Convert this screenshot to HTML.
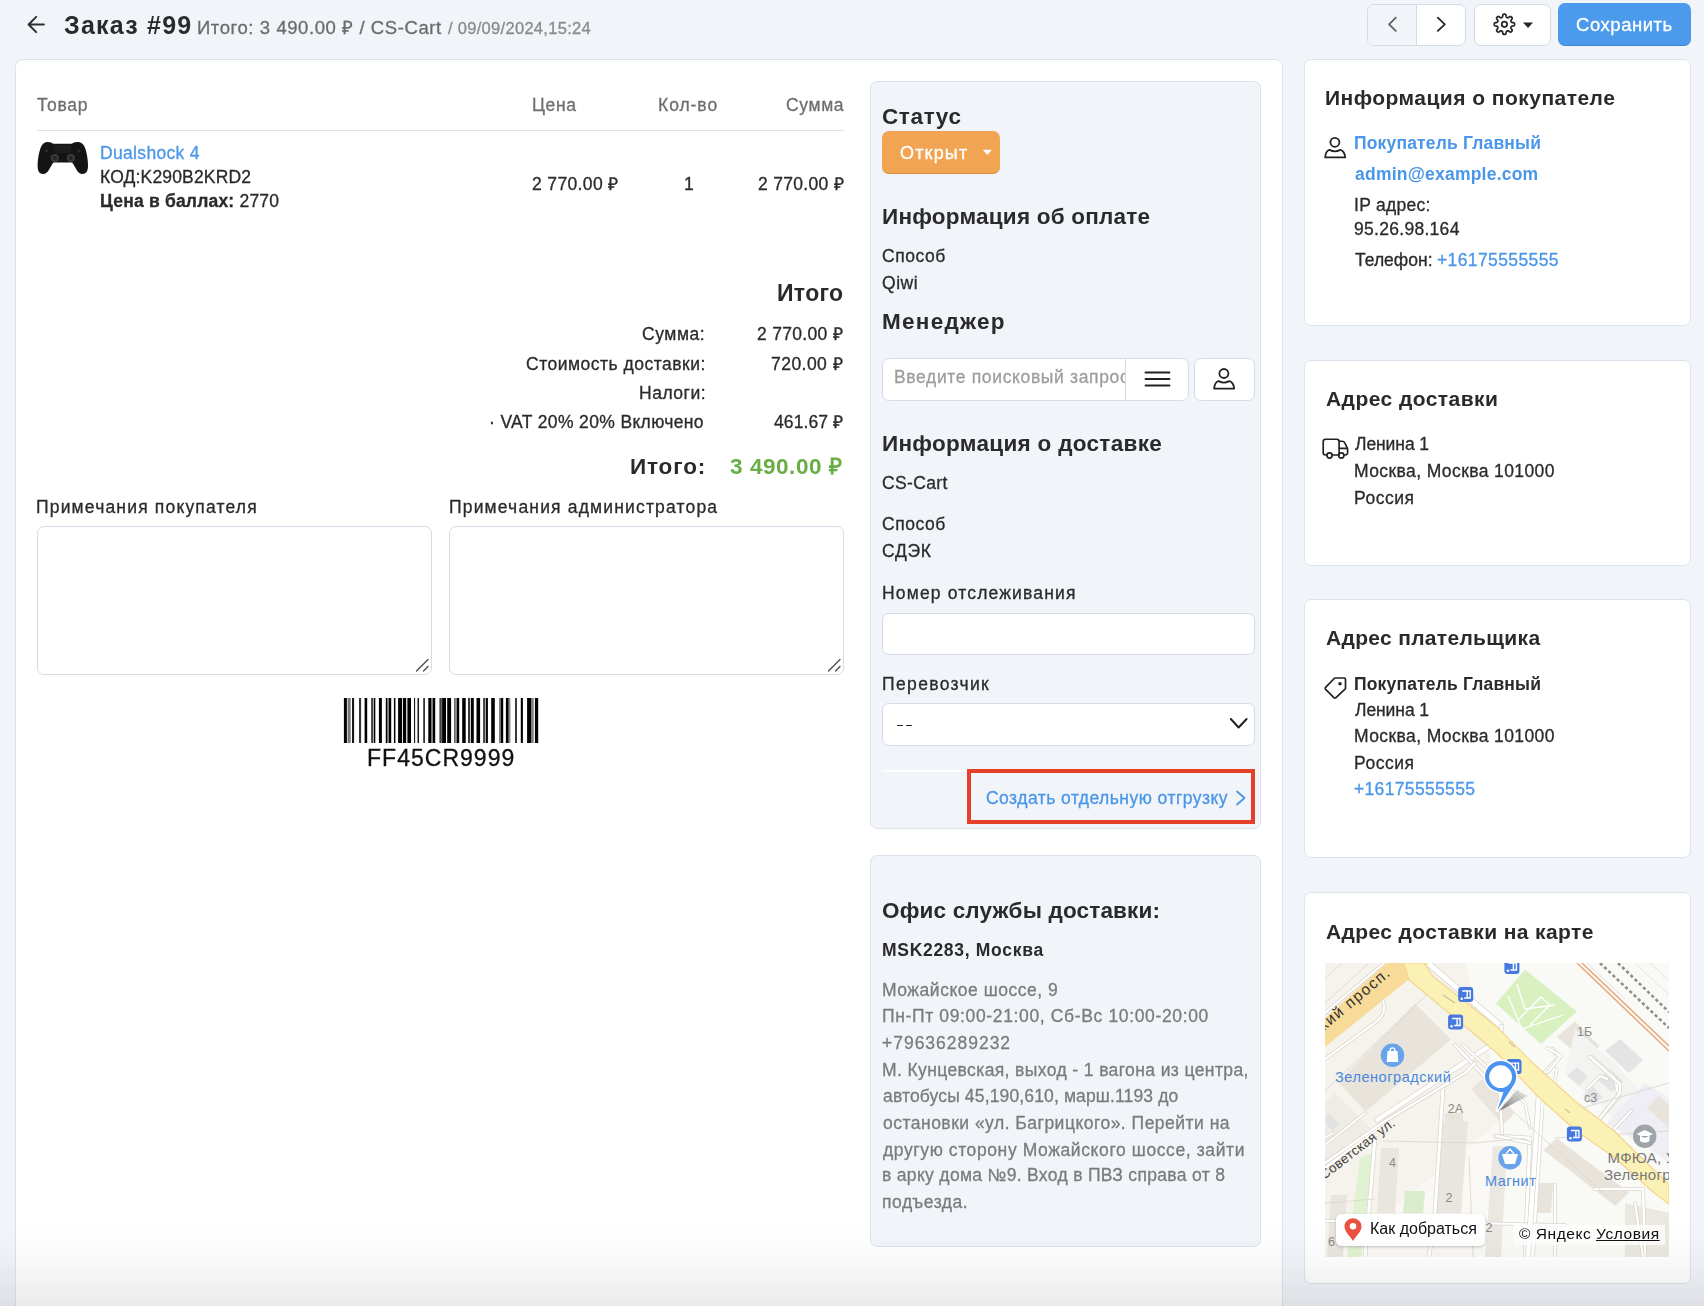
<!DOCTYPE html>
<html lang="ru"><head><meta charset="utf-8"><title>Заказ #99</title><style>
*{box-sizing:border-box}
html,body{margin:0;padding:0}
body{width:1704px;height:1306px;overflow:hidden;background:#f1f4f9;font-family:"Liberation Sans",sans-serif;position:relative}
.t{position:absolute;white-space:nowrap;line-height:40px;margin:0;will-change:transform}
.r{-webkit-text-stroke:0.3px currentColor}
.t b{font-weight:700}
.b{position:absolute}
svg{position:absolute;overflow:visible}
</style></head>
<body>
<svg style="left:26px;top:14px" width="21" height="21" viewBox="0 0 21 21" ><path d="M10.2 2.9 L2.6 10.5 L10.2 18.1 M2.6 10.5 H17.9" fill="none" stroke="#2f2f2f" stroke-width="2" stroke-linecap="round" stroke-linejoin="round"/></svg>
<div class="b" style="left:1367px;top:3.5px;width:98.5px;height:42px;border:1px solid #d3dbe7;border-radius:7px;background:#fff;overflow:hidden"></div>
<div class="b" style="left:1368px;top:4.5px;width:48.5px;height:40px;background:#f1f4f9;border-radius:6px 0 0 6px"></div>
<div class="b" style="left:1416px;top:4.5px;width:1px;height:40px;background:#d3dbe7"></div>
<svg style="left:1386px;top:16px" width="13" height="17" viewBox="0 0 13 17" ><path d="M9.8 1.7 L3.1 8.3 L9.8 14.9" fill="none" stroke="#5f5f5f" stroke-width="1.8" stroke-linecap="round" stroke-linejoin="round"/></svg>
<svg style="left:1435px;top:16px" width="13" height="17" viewBox="0 0 13 17" ><path d="M2.8 1.7 L9.8 8.3 L2.8 14.9" fill="none" stroke="#262626" stroke-width="1.8" stroke-linecap="round" stroke-linejoin="round"/></svg>
<div class="b" style="left:1473.5px;top:3.5px;width:77px;height:42px;border:1px solid #d3dbe7;border-radius:7px;background:#fff"></div>
<svg style="left:1492px;top:12px" width="25" height="25" viewBox="0 0 25 25" ><path d="M12.40 2.15 L12.60 2.15 L12.80 2.17 L13.00 2.20 L13.19 2.24 L13.38 2.31 L13.57 2.43 L13.74 2.61 L13.89 2.89 L14.01 3.29 L14.10 3.77 L14.17 4.25 L14.24 4.64 L14.32 4.93 L14.42 5.12 L14.54 5.25 L14.66 5.35 L14.78 5.42 L14.91 5.49 L15.04 5.55 L15.17 5.60 L15.31 5.66 L15.44 5.71 L15.58 5.75 L15.72 5.79 L15.87 5.81 L16.04 5.79 L16.25 5.73 L16.51 5.59 L16.84 5.36 L17.23 5.07 L17.64 4.79 L18.00 4.59 L18.30 4.50 L18.56 4.49 L18.77 4.54 L18.95 4.63 L19.12 4.73 L19.28 4.86 L19.43 4.99 L19.58 5.12 L19.71 5.27 L19.84 5.42 L19.97 5.58 L20.07 5.75 L20.16 5.93 L20.21 6.14 L20.20 6.40 L20.11 6.70 L19.91 7.06 L19.63 7.47 L19.34 7.86 L19.11 8.19 L18.97 8.45 L18.91 8.66 L18.89 8.83 L18.91 8.98 L18.95 9.12 L18.99 9.26 L19.04 9.39 L19.10 9.53 L19.15 9.66 L19.21 9.79 L19.28 9.92 L19.35 10.04 L19.45 10.16 L19.58 10.28 L19.77 10.38 L20.06 10.46 L20.45 10.53 L20.93 10.60 L21.41 10.69 L21.81 10.81 L22.09 10.96 L22.27 11.13 L22.39 11.32 L22.46 11.51 L22.50 11.70 L22.53 11.90 L22.55 12.10 L22.55 12.30 L22.55 12.50 L22.53 12.70 L22.50 12.90 L22.46 13.09 L22.39 13.28 L22.27 13.47 L22.09 13.64 L21.81 13.79 L21.41 13.91 L20.93 14.00 L20.45 14.07 L20.06 14.14 L19.77 14.22 L19.58 14.32 L19.45 14.44 L19.35 14.56 L19.28 14.68 L19.21 14.81 L19.15 14.94 L19.10 15.07 L19.04 15.21 L18.99 15.34 L18.95 15.48 L18.91 15.62 L18.89 15.77 L18.91 15.94 L18.97 16.15 L19.11 16.41 L19.34 16.74 L19.63 17.13 L19.91 17.54 L20.11 17.90 L20.20 18.20 L20.21 18.46 L20.16 18.67 L20.07 18.85 L19.97 19.02 L19.84 19.18 L19.71 19.33 L19.58 19.48 L19.43 19.61 L19.28 19.74 L19.12 19.87 L18.95 19.97 L18.77 20.06 L18.56 20.11 L18.30 20.10 L18.00 20.01 L17.64 19.81 L17.23 19.53 L16.84 19.24 L16.51 19.01 L16.25 18.87 L16.04 18.81 L15.87 18.79 L15.72 18.81 L15.58 18.85 L15.44 18.89 L15.31 18.94 L15.17 19.00 L15.04 19.05 L14.91 19.11 L14.78 19.18 L14.66 19.25 L14.54 19.35 L14.42 19.48 L14.32 19.67 L14.24 19.96 L14.17 20.35 L14.10 20.83 L14.01 21.31 L13.89 21.71 L13.74 21.99 L13.57 22.17 L13.38 22.29 L13.19 22.36 L13.00 22.40 L12.80 22.43 L12.60 22.45 L12.40 22.45 L12.20 22.45 L12.00 22.43 L11.80 22.40 L11.61 22.36 L11.42 22.29 L11.23 22.17 L11.06 21.99 L10.91 21.71 L10.79 21.31 L10.70 20.83 L10.63 20.35 L10.56 19.96 L10.48 19.67 L10.38 19.48 L10.26 19.35 L10.14 19.25 L10.02 19.18 L9.89 19.11 L9.76 19.05 L9.63 19.00 L9.49 18.94 L9.36 18.89 L9.22 18.85 L9.08 18.81 L8.93 18.79 L8.76 18.81 L8.55 18.87 L8.29 19.01 L7.96 19.24 L7.57 19.53 L7.16 19.81 L6.80 20.01 L6.50 20.10 L6.24 20.11 L6.03 20.06 L5.85 19.97 L5.68 19.87 L5.52 19.74 L5.37 19.61 L5.22 19.48 L5.09 19.33 L4.96 19.18 L4.83 19.02 L4.73 18.85 L4.64 18.67 L4.59 18.46 L4.60 18.20 L4.69 17.90 L4.89 17.54 L5.17 17.13 L5.46 16.74 L5.69 16.41 L5.83 16.15 L5.89 15.94 L5.91 15.77 L5.89 15.62 L5.85 15.48 L5.81 15.34 L5.76 15.21 L5.70 15.07 L5.65 14.94 L5.59 14.81 L5.52 14.68 L5.45 14.56 L5.35 14.44 L5.22 14.32 L5.03 14.22 L4.74 14.14 L4.35 14.07 L3.87 14.00 L3.39 13.91 L2.99 13.79 L2.71 13.64 L2.53 13.47 L2.41 13.28 L2.34 13.09 L2.30 12.90 L2.27 12.70 L2.25 12.50 L2.25 12.30 L2.25 12.10 L2.27 11.90 L2.30 11.70 L2.34 11.51 L2.41 11.32 L2.53 11.13 L2.71 10.96 L2.99 10.81 L3.39 10.69 L3.87 10.60 L4.35 10.53 L4.74 10.46 L5.03 10.38 L5.22 10.28 L5.35 10.16 L5.45 10.04 L5.52 9.92 L5.59 9.79 L5.65 9.66 L5.70 9.53 L5.76 9.39 L5.81 9.26 L5.85 9.12 L5.89 8.98 L5.91 8.83 L5.89 8.66 L5.83 8.45 L5.69 8.19 L5.46 7.86 L5.17 7.47 L4.89 7.06 L4.69 6.70 L4.60 6.40 L4.59 6.14 L4.64 5.93 L4.73 5.75 L4.83 5.58 L4.96 5.42 L5.09 5.27 L5.22 5.12 L5.37 4.99 L5.52 4.86 L5.68 4.73 L5.85 4.63 L6.03 4.54 L6.24 4.49 L6.50 4.50 L6.80 4.59 L7.16 4.79 L7.57 5.07 L7.96 5.36 L8.29 5.59 L8.55 5.73 L8.76 5.79 L8.93 5.81 L9.08 5.79 L9.22 5.75 L9.36 5.71 L9.49 5.66 L9.63 5.60 L9.76 5.55 L9.89 5.49 L10.02 5.42 L10.14 5.35 L10.26 5.25 L10.38 5.12 L10.48 4.93 L10.56 4.64 L10.63 4.25 L10.70 3.77 L10.79 3.29 L10.91 2.89 L11.06 2.61 L11.23 2.43 L11.42 2.31 L11.61 2.24 L11.80 2.20 L12.00 2.17 L12.20 2.15Z" fill="none" stroke="#262626" stroke-width="1.75" stroke-linejoin="round"/><circle cx="12.4" cy="12.3" r="2.7" fill="none" stroke="#262626" stroke-width="1.75"/></svg>
<svg style="left:1522px;top:21.8px" width="12" height="7" viewBox="0 0 12 7" ><path d="M1 0.5 H11 L6 6.1Z" fill="#262626"/></svg>
<div class="b" style="left:1558px;top:3px;width:133px;height:43px;background:#4b9aec;border-radius:7px;border-bottom:1px solid #3f86d6"></div>
<div class="b" style="left:15px;top:59px;width:1268px;height:1300px;background:#fff;border:1px solid #dde3ec;border-radius:8px"></div>
<div class="b" style="left:37px;top:130px;width:807px;height:1px;background:#d8e0ea"></div>
<svg style="left:36px;top:140px" width="54" height="36" viewBox="0 0 54 36" ><path d="M11.9 2 C14.5 2 16 3 17.5 3.8 H35.5 C37 3 38.7 2 41.3 2 C45.5 2 48 4.5 49.5 9 C51 14 52 20 52 26 C52 31 50 34 46.5 34 C43.5 34 42 32 41 30.5 C39.5 28 37.5 24 36 22.5 H17.5 C16 24 14 28 12.5 30.5 C11.5 32 10 34 7 34 C3.5 34 1.6 31 1.6 26 C1.6 20 2.6 14 4.2 9 C5.7 4.5 8 2 11.9 2 Z" fill="#141414"/>
<path d="M17.5 5 H35.5 L34 13 H19 Z" fill="#1c1c1e"/>
<circle cx="18.8" cy="18" r="4.1" fill="#3b3b3d"/><circle cx="34.8" cy="18" r="4.1" fill="#3b3b3d"/>
<circle cx="18.8" cy="18" r="2.3" fill="#262628"/><circle cx="34.8" cy="18" r="2.3" fill="#262628"/>
<circle cx="10.5" cy="11" r="1.6" fill="#2c2c2e"/><circle cx="43" cy="11" r="1.6" fill="#2c2c2e"/></svg>
<div class="b" style="left:37px;top:526px;width:395px;height:149px;background:#fff;border:1px solid #d5dce8;border-radius:7px"></div>
<svg style="left:414px;top:657px" width="16" height="16" viewBox="0 0 16 16" ><path d="M2.5 14 L14 2.5 M9.5 14 L14 9.5" fill="none" stroke="#4a4a4a" stroke-width="1.3" stroke-linecap="round"/></svg>
<div class="b" style="left:449px;top:526px;width:395px;height:149px;background:#fff;border:1px solid #d5dce8;border-radius:7px"></div>
<svg style="left:826px;top:657px" width="16" height="16" viewBox="0 0 16 16" ><path d="M2.5 14 L14 2.5 M9.5 14 L14 9.5" fill="none" stroke="#4a4a4a" stroke-width="1.3" stroke-linecap="round"/></svg>
<svg style="left:340px;top:698px" width="200" height="46" viewBox="0 0 200 46"><rect x="3.90" y="0" width="3.00" height="45" fill="#000" fill-opacity="1"/><rect x="7.60" y="0" width="1.80" height="45" fill="#000" fill-opacity="0.55"/><rect x="9.60" y="0" width="0.80" height="45" fill="#000" fill-opacity="0.9"/><rect x="12.00" y="0" width="2.10" height="45" fill="#000" fill-opacity="0.9"/><rect x="19.00" y="0" width="2.10" height="45" fill="#000" fill-opacity="0.8"/><rect x="24.60" y="0" width="2.60" height="45" fill="#000" fill-opacity="1"/><rect x="31.10" y="0" width="2.10" height="45" fill="#000" fill-opacity="0.75"/><rect x="33.80" y="0" width="1.50" height="45" fill="#000" fill-opacity="1"/><rect x="38.90" y="0" width="3.00" height="45" fill="#000" fill-opacity="1"/><rect x="45.80" y="0" width="1.50" height="45" fill="#000" fill-opacity="1"/><rect x="47.30" y="0" width="1.50" height="45" fill="#000" fill-opacity="0.45"/><rect x="48.80" y="0" width="2.40" height="45" fill="#000" fill-opacity="1"/><rect x="53.90" y="0" width="1.50" height="45" fill="#000" fill-opacity="1"/><rect x="58.10" y="0" width="3.90" height="45" fill="#000" fill-opacity="1"/><rect x="62.90" y="0" width="3.30" height="45" fill="#000" fill-opacity="1"/><rect x="67.40" y="0" width="3.60" height="45" fill="#000" fill-opacity="1"/><rect x="74.00" y="0" width="1.10" height="45" fill="#000" fill-opacity="0.9"/><rect x="77.50" y="0" width="1.50" height="45" fill="#000" fill-opacity="0.9"/><rect x="83.20" y="0" width="1.80" height="45" fill="#000" fill-opacity="0.8"/><rect x="88.30" y="0" width="3.00" height="45" fill="#000" fill-opacity="1"/><rect x="91.30" y="0" width="1.50" height="45" fill="#000" fill-opacity="0.45"/><rect x="92.80" y="0" width="2.40" height="45" fill="#000" fill-opacity="1"/><rect x="99.40" y="0" width="2.40" height="45" fill="#000" fill-opacity="0.75"/><rect x="102.10" y="0" width="3.90" height="45" fill="#000" fill-opacity="1"/><rect x="107.20" y="0" width="3.90" height="45" fill="#000" fill-opacity="1"/><rect x="114.10" y="0" width="0.60" height="45" fill="#000" fill-opacity="0.9"/><rect x="114.70" y="0" width="2.10" height="45" fill="#000" fill-opacity="0.45"/><rect x="116.80" y="0" width="2.40" height="45" fill="#000" fill-opacity="1"/><rect x="122.20" y="0" width="3.50" height="45" fill="#000" fill-opacity="1"/><rect x="128.10" y="0" width="1.80" height="45" fill="#000" fill-opacity="0.85"/><rect x="130.80" y="0" width="3.00" height="45" fill="#000" fill-opacity="1"/><rect x="136.50" y="0" width="3.60" height="45" fill="#000" fill-opacity="1"/><rect x="143.10" y="0" width="2.10" height="45" fill="#000" fill-opacity="0.75"/><rect x="145.80" y="0" width="2.10" height="45" fill="#000" fill-opacity="1"/><rect x="151.20" y="0" width="3.60" height="45" fill="#000" fill-opacity="1"/><rect x="159.00" y="0" width="1.20" height="45" fill="#000" fill-opacity="0.5"/><rect x="160.50" y="0" width="2.70" height="45" fill="#000" fill-opacity="1"/><rect x="165.90" y="0" width="2.70" height="45" fill="#000" fill-opacity="1"/><rect x="168.60" y="0" width="1.80" height="45" fill="#000" fill-opacity="0.45"/><rect x="175.10" y="0" width="1.80" height="45" fill="#000" fill-opacity="0.85"/><rect x="180.80" y="0" width="2.10" height="45" fill="#000" fill-opacity="1"/><rect x="187.10" y="0" width="3.90" height="45" fill="#000" fill-opacity="1"/><rect x="191.00" y="0" width="2.70" height="45" fill="#000" fill-opacity="0.5"/><rect x="194.90" y="0" width="3.30" height="45" fill="#000" fill-opacity="1"/></svg>
<div class="b" style="left:870px;top:81px;width:391px;height:748px;background:#f1f4f9;border:1px solid #dde3ec;border-radius:7px"></div>
<div class="b" style="left:882px;top:131px;width:118px;height:43px;background:#f1a553;border-radius:7px;border-bottom:1px solid #dd8c3c"></div>
<svg style="left:982px;top:149px" width="11" height="7" viewBox="0 0 11 7" ><path d="M0.8 0.8 H10 L5.4 5.9Z" fill="#fff"/></svg>
<div class="b" style="left:882px;top:358px;width:307px;height:43px;background:#fff;border:1px solid #d5dce8;border-radius:7px"></div>
<div class="b" style="left:1125px;top:359px;width:62px;height:41px;background:#fff;border-left:1px solid #d5dce8;border-radius:0 6px 6px 0;z-index:2"></div>
<svg style="left:1144px;top:370px;z-index:3" width="27" height="18" viewBox="0 0 27 18" ><path d="M1.5 2.5 H25.5 M1.5 9 H25.5 M1.5 15.5 H25.5" fill="none" stroke="#222" stroke-width="1.8" stroke-linecap="round"/></svg>
<div class="b" style="left:1194px;top:358px;width:61px;height:43px;background:#fff;border:1px solid #d5dce8;border-radius:7px"></div>
<svg style="left:1211px;top:367px" width="26" height="26" viewBox="0 0 26 26" ><g transform="translate(1,1)" fill="none" stroke="#222" stroke-width="1.8" stroke-linejoin="round"><circle cx="11.9" cy="5.5" r="4.5"/><path d="M2.2 20.6 C2.2 16.5 4.5 13.2 6.5 13.1 C8.2 13.9 9.8 14.6 11.9 14.6 C14 14.6 15.6 13.9 17.3 13.1 C19.3 13.2 22.2 16.5 22.2 20.6 Z"/></g></svg>
<div class="b" style="left:882px;top:612.5px;width:373px;height:42.5px;background:#fff;border:1px solid #d5dce8;border-radius:7px"></div>
<div class="b" style="left:882px;top:703px;width:373px;height:43px;background:#fff;border:1px solid #d5dce8;border-radius:7px"></div>
<svg style="left:1229px;top:717px" width="20" height="14" viewBox="0 0 20 14" ><path d="M1.8 2 L9.6 10.5 L17.6 2" fill="none" stroke="#222" stroke-width="2" stroke-linecap="round" stroke-linejoin="round"/></svg>
<div class="b" style="left:882px;top:770px;width:373px;height:1.5px;background:#fcfdfe"></div>
<div class="b" style="left:897.3px;top:724.9px;width:6.1px;height:1.6px;background:#262626;border-radius:1px"></div>
<div class="b" style="left:906.2px;top:724.9px;width:6.0px;height:1.6px;background:#262626;border-radius:1px"></div>
<svg style="left:1234px;top:789px" width="14" height="18" viewBox="0 0 14 18" ><path d="M3 2.5 L10.5 9 L3 15.5" fill="none" stroke="#4a96e8" stroke-width="1.8" stroke-linecap="round" stroke-linejoin="round"/></svg>
<div class="b" style="left:967px;top:768.5px;width:288px;height:55px;border:4px solid #e5402a"></div>
<div class="b" style="left:870px;top:855px;width:391px;height:392px;background:#f1f4f9;border:1px solid #dde3ec;border-radius:7px"></div>
<div class="b" style="left:1304px;top:59px;width:387px;height:267.0px;background:#fff;border:1px solid #dde3ec;border-radius:7px"></div>
<div class="b" style="left:1304px;top:360px;width:387px;height:206.0px;background:#fff;border:1px solid #dde3ec;border-radius:7px"></div>
<div class="b" style="left:1304px;top:599px;width:387px;height:259.0px;background:#fff;border:1px solid #dde3ec;border-radius:7px"></div>
<div class="b" style="left:1304px;top:892px;width:387px;height:392.0px;background:#fff;border:1px solid #dde3ec;border-radius:7px"></div>
<svg style="left:1321px;top:134px" width="28" height="28" viewBox="0 0 28 28" ><g transform="translate(2,2.8)" fill="none" stroke="#222" stroke-width="1.8" stroke-linejoin="round"><circle cx="11.9" cy="5.5" r="4.5"/><path d="M2.2 20.6 C2.2 16.5 4.5 13.2 6.5 13.1 C8.2 13.9 9.8 14.6 11.9 14.6 C14 14.6 15.6 13.9 17.3 13.1 C19.3 13.2 22.2 16.5 22.2 20.6 Z"/></g></svg>
<svg style="left:1320px;top:436px" width="32" height="26" viewBox="0 0 32 26" ><g fill="none" stroke="#222" stroke-width="1.65" stroke-linejoin="round" stroke-linecap="round"><path d="M6.8 19 H5.4 C4.1 19 3.2 18.1 3.2 16.8 V5.6 C3.2 4.2 4.2 3.2 5.6 3.2 H16.7 C18 3.2 19.1 4.2 19.1 5.6 V18.9"/><path d="M12.1 19 H18.5"/><path d="M19.1 5.2 H22.2 C23.4 5.2 24.3 5.9 24.8 6.9 L27 11.4 C27.4 12.1 27.6 12.8 27.6 13.5 V16.6 C27.6 17.9 26.6 18.9 25.3 19 H24"/><path d="M19.3 12.3 H27.4"/><circle cx="9.5" cy="19.5" r="2.65"/><circle cx="21.3" cy="19.5" r="2.65"/></g></svg>
<svg style="left:1321px;top:673px" width="30" height="30" viewBox="0 0 30 30" ><g fill="none" stroke="#222" stroke-width="1.7" stroke-linejoin="round"><path d="M13.7 5 H23.2 C24 5 24.5 5.5 24.5 6.3 V15 C24.5 15.4 24.3 15.8 24 16.1 L15 24.6 C14.4 25.2 13.5 25.2 12.9 24.6 L4.6 16.3 C4 15.7 4 14.9 4.6 14.3 Z"/></g><circle cx="19" cy="10.8" r="1.75" fill="#222"/></svg>
<svg style="left:1325px;top:963px" width="344" height="294" viewBox="0 0 344 294"><defs><clipPath id="mc"><rect width="344" height="294"/></clipPath></defs><g clip-path="url(#mc)"><rect width="344" height="294" fill="#f9f8f4"/><path d="M0 0 H140 L175 70 L210 130 L0 300 Z" fill="#f6f3ec"/><path d="M140 0 H344 V294 H150 L180 150 Z" fill="#f9f9f6"/><path d="M13.5 119 L90 40.5 L126 76.5 L40.5 148.6 Z" fill="#e8e3db"/><path d="M0 140 L10 130 L45 165 L0 215 Z" fill="#efece6"/><path d="M3 150 L14 160 L8 168 L0 160 Z" fill="#e2e2e2"/><path d="M232 74 L250 58.5 L274.6 83.3 L259 96.8 Z" fill="#e8e3db"/><path d="M250 66 L290 100 L325 140 L300 165 L240 110 Z" fill="#f3f3f1"/><path d="M280 88 L295 76 L318 97 L304 110 Z" fill="#e4e4e4"/><path d="M242 113 L252 104 L263 114 L254 123 Z" fill="#e4e4e4"/><path d="M273 117 L285 106 L298 118 L287 129 Z" fill="#e4e4e4"/><path d="M258 132 L268 124 L278 134 L268 142 Z" fill="#e4e4e4"/><path d="M282 160 L320 120 L344 135 V200 L330 190 Z" fill="#eeeef4"/><path d="M322 145 L334 133 L344 142 V165 Z" fill="#e8e3db"/><path d="M146 126 L160 114 L190 150 L178 162 Z" fill="#e9e4dd"/><path d="M218.4 186.9 L231.9 175.6 L304 229.6 L290.4 243 Z" fill="#e8e3db"/><path d="M120 150 H138 V160 H120 Z" fill="#e8e3db"/><path d="M117 158 L143 158 L136 250 L111 250 Z" fill="#e9e5df"/><path d="M56 185 L74 185 L70 250 L52 250 Z" fill="#e9e5df"/><path d="M6 232 L22 232 L18 294 L2 294 Z" fill="#e9e5df"/><path d="M214 220 L228 220 L226 250 L212 250 Z" fill="#e8e3db"/><path d="M168 183 L182 183 L176 294 H160 Z" fill="#ebe7e1"/><path d="M300 240 L344 250 V294 H300 Z" fill="#ebe7e1"/><path d="M80 228 L100 228 L98 250 L78 250 Z" fill="#d9eccb"/><path d="M35 195 L48 190 L36 294 H22 Z" fill="#e0f2d2"/><path d="M171 40.5 L200 6.8 L252 48.4 L216 81 Z" fill="#d9f0c0"/><path d="M183 33 L197 66 L238 52 M192 21 L200 46 L230 42 M194 56 L216 34 L225 42 L205 62" fill="none" stroke="#fff" stroke-width="1.3"/><path d="M52 157 L163 84" fill="none" stroke="#d8d4cd" stroke-linecap="round" stroke-linejoin="round" stroke-width="5.4"/><path d="M52 157 L163 84" fill="none" stroke="#ffffff" stroke-linecap="round" stroke-linejoin="round" stroke-width="4.0"/><path d="M0 205 L60 160" fill="none" stroke="#d8d4cd" stroke-linecap="round" stroke-linejoin="round" stroke-width="4.4"/><path d="M0 205 L60 160" fill="none" stroke="#ffffff" stroke-linecap="round" stroke-linejoin="round" stroke-width="3.0"/><path d="M0 182 L40 150" fill="none" stroke="#d8d4cd" stroke-linecap="round" stroke-linejoin="round" stroke-width="3.4"/><path d="M0 182 L40 150" fill="none" stroke="#ffffff" stroke-linecap="round" stroke-linejoin="round" stroke-width="2.0"/><path d="M103 0 L176 63" fill="none" stroke="#d8d4cd" stroke-linecap="round" stroke-linejoin="round" stroke-width="6.4"/><path d="M103 0 L176 63" fill="none" stroke="#ffffff" stroke-linecap="round" stroke-linejoin="round" stroke-width="5.0"/><path d="M176 63 L178 80" fill="none" stroke="#d8d4cd" stroke-linecap="round" stroke-linejoin="round" stroke-width="4.4"/><path d="M176 63 L178 80" fill="none" stroke="#ffffff" stroke-linecap="round" stroke-linejoin="round" stroke-width="3.0"/><path d="M130 82 L175 130 L177 172" fill="none" stroke="#d8d4cd" stroke-linecap="round" stroke-linejoin="round" stroke-width="3.9"/><path d="M130 82 L175 130 L177 172" fill="none" stroke="#ffffff" stroke-linecap="round" stroke-linejoin="round" stroke-width="2.5"/><path d="M170 173 L205 175 L200 294" fill="none" stroke="#d8d4cd" stroke-linecap="round" stroke-linejoin="round" stroke-width="4.4"/><path d="M170 173 L205 175 L200 294" fill="none" stroke="#ffffff" stroke-linecap="round" stroke-linejoin="round" stroke-width="3.0"/><path d="M218 120 L207 294" fill="none" stroke="#d8d4cd" stroke-linecap="round" stroke-linejoin="round" stroke-width="5.4"/><path d="M218 120 L207 294" fill="none" stroke="#ffffff" stroke-linecap="round" stroke-linejoin="round" stroke-width="4.0"/><path d="M118 125 L116 157 L110 250 L104 294" fill="none" stroke="#d8d4cd" stroke-linecap="round" stroke-linejoin="round" stroke-width="4.4"/><path d="M118 125 L116 157 L110 250 L104 294" fill="none" stroke="#ffffff" stroke-linecap="round" stroke-linejoin="round" stroke-width="3.0"/><path d="M50 175 L40 294" fill="none" stroke="#d8d4cd" stroke-linecap="round" stroke-linejoin="round" stroke-width="4.4"/><path d="M50 175 L40 294" fill="none" stroke="#ffffff" stroke-linecap="round" stroke-linejoin="round" stroke-width="3.0"/><path d="M227 86 L234 94 L215 115" fill="none" stroke="#d8d4cd" stroke-linecap="round" stroke-linejoin="round" stroke-width="4.4"/><path d="M227 86 L234 94 L215 115" fill="none" stroke="#ffffff" stroke-linecap="round" stroke-linejoin="round" stroke-width="3.0"/><path d="M266 94 L290 115 L294 133 L275 155" fill="none" stroke="#d8d4cd" stroke-linecap="round" stroke-linejoin="round" stroke-width="4.4"/><path d="M266 94 L290 115 L294 133 L275 155" fill="none" stroke="#ffffff" stroke-linecap="round" stroke-linejoin="round" stroke-width="3.0"/><path d="M232 106 L226 140 L250 162" fill="none" stroke="#d8d4cd" stroke-linecap="round" stroke-linejoin="round" stroke-width="3.4"/><path d="M232 106 L226 140 L250 162" fill="none" stroke="#ffffff" stroke-linecap="round" stroke-linejoin="round" stroke-width="2.0"/><path d="M230 222 L230 294 M270 226 L318 226 L320 294" fill="none" stroke="#d8d4cd" stroke-linecap="round" stroke-linejoin="round" stroke-width="3.9"/><path d="M230 222 L230 294 M270 226 L318 226 L320 294" fill="none" stroke="#ffffff" stroke-linecap="round" stroke-linejoin="round" stroke-width="2.5"/><path d="M0 258 H110 M145 260 L240 262" fill="none" stroke="#d8d4cd" stroke-linecap="round" stroke-linejoin="round" stroke-width="3.4"/><path d="M0 258 H110 M145 260 L240 262" fill="none" stroke="#ffffff" stroke-linecap="round" stroke-linejoin="round" stroke-width="2.0"/><path d="M207 112 L262 170 L275 172" fill="none" stroke="#d6d2cb" stroke-width="3.2"/><path d="M207 112 L262 170 L275 172" fill="none" stroke="#fff" stroke-width="1.8"/><path d="M214 131 L203 294" fill="none" stroke="#d8d4cd" stroke-linecap="round" stroke-linejoin="round" stroke-width="5.9"/><path d="M214 131 L203 294" fill="none" stroke="#ffffff" stroke-linecap="round" stroke-linejoin="round" stroke-width="4.5"/><path d="M172 173 L205 180" fill="none" stroke="#d8d4cd" stroke-linecap="round" stroke-linejoin="round" stroke-width="3.9"/><path d="M172 173 L205 180" fill="none" stroke="#ffffff" stroke-linecap="round" stroke-linejoin="round" stroke-width="2.5"/><path d="M265 94 L295 121 L295 130 L271 160" fill="none" stroke="#d8d4cd" stroke-linecap="round" stroke-linejoin="round" stroke-width="3.9"/><path d="M265 94 L295 121 L295 130 L271 160" fill="none" stroke="#ffffff" stroke-linecap="round" stroke-linejoin="round" stroke-width="2.5"/><path d="M282 116 L275 113 L262 126" fill="none" stroke="#d8d4cd" stroke-linecap="round" stroke-linejoin="round" stroke-width="3.6"/><path d="M282 116 L275 113 L262 126" fill="none" stroke="#ffffff" stroke-linecap="round" stroke-linejoin="round" stroke-width="2.2"/><path d="M222 85 L236 93 L223 109" fill="none" stroke="#d8d4cd" stroke-linecap="round" stroke-linejoin="round" stroke-width="3.6"/><path d="M222 85 L236 93 L223 109" fill="none" stroke="#ffffff" stroke-linecap="round" stroke-linejoin="round" stroke-width="2.2"/><path d="M306 148 L280 176 M310 240 L318 294" fill="none" stroke="#d8d4cd" stroke-linecap="round" stroke-linejoin="round" stroke-width="3.6"/><path d="M306 148 L280 176 M310 240 L318 294" fill="none" stroke="#ffffff" stroke-linecap="round" stroke-linejoin="round" stroke-width="2.2"/><path d="M0 200 L60 158 L140 110 L150 100" fill="none" stroke="#d8d4cd" stroke-linecap="round" stroke-linejoin="round" stroke-width="3.9"/><path d="M0 200 L60 158 L140 110 L150 100" fill="none" stroke="#ffffff" stroke-linecap="round" stroke-linejoin="round" stroke-width="2.5"/><path d="M0 175 L8 170 M138 82 L200 140 L205 165" fill="none" stroke="#d8d4cd" stroke-linecap="round" stroke-linejoin="round" stroke-width="3.4"/><path d="M0 175 L8 170 M138 82 L200 140 L205 165" fill="none" stroke="#ffffff" stroke-linecap="round" stroke-linejoin="round" stroke-width="2.0"/><path d="M0 128 L112 22 M190 150 L290 240 M144 194 L148 294 M58 178 L150 180 M230 175 L344 168 M0 240 L50 236 M150 180 L200 175 M240 150 L344 120" fill="none" stroke="#dcd8d1" stroke-width="0.9"/><path d="M0 50 L58 1" fill="none" stroke="#d8d4cd" stroke-width="3.6" stroke-linecap="round"/><path d="M0 50 L58 1" fill="none" stroke="#fff" stroke-width="2.2" stroke-linecap="round"/><path d="M0 16 L17 0 M0 40 L44 0" fill="none" stroke="#dedad3" stroke-width="0.9"/><path d="M0 55 L62 0 H104 L0 84 Z" fill="#f8db98"/><path d="M0 96 L44 64 C56 56 62 50 58 38" fill="none" stroke="#d8d4cd" stroke-width="3.6" stroke-linecap="round"/><path d="M0 96 L44 64 C56 56 62 50 58 38" fill="none" stroke="#fff" stroke-width="2.2" stroke-linecap="round"/><path d="M79 0 L84 17 L95 26 L172 90 L211 131.7 L250 167 L289 194 L328 229 L344 241 L344 221 L328 206 L289 168 L250 138 L211 103 L172 64 L108 13.5 L99 0Z" fill="#fcf1b4" stroke="#f2d68f" stroke-width="1.2" stroke-linejoin="round"/><path d="M124 36 L118 32 M130 40 L124 36 M190 84 L184 79 M245 150 L240 146" fill="none" stroke="#9a9a9a" stroke-width="0.8"/><path d="M252 0 L344 88 M257 0 L344 83" fill="none" stroke="#e9a77c" stroke-width="1.5"/><path d="M275 0 L344 65 M293 0 L344 49" fill="none" stroke="#8f8f8f" stroke-width="2.6" stroke-dasharray="3.2 2.6"/><path d="M310 0 L344 32 M325 0 L344 18 M262 0 L300 36" fill="none" stroke="#e3e3e3" stroke-width="1"/><rect x="133.2" y="24.0" width="15" height="15" rx="3.2" fill="#4579df"/><path d="M137.2 28.0 H145.2 V35.0 H139.2 M142.2 28.0 V35.0" fill="none" stroke="#fff" stroke-width="1.4"/><circle cx="136.7" cy="35.7" r="1.3" fill="#fff"/><rect x="123.1" y="51.5" width="15" height="15" rx="3.2" fill="#4579df"/><path d="M127.1 55.5 H135.1 V62.5 H129.1 M132.1 55.5 V62.5" fill="none" stroke="#fff" stroke-width="1.4"/><circle cx="126.6" cy="63.2" r="1.3" fill="#fff"/><rect x="241.9" y="163.5" width="15" height="15" rx="3.2" fill="#4579df"/><path d="M245.9 167.5 H253.9 V174.5 H247.9 M250.9 167.5 V174.5" fill="none" stroke="#fff" stroke-width="1.4"/><circle cx="245.4" cy="175.2" r="1.3" fill="#fff"/><rect x="179.4" y="-4.0" width="15" height="15" rx="3.2" fill="#4579df"/><path d="M183.4 0.0 H191.4 V7.0 H185.4 M188.4 0.0 V7.0" fill="none" stroke="#fff" stroke-width="1.4"/><circle cx="182.9" cy="7.7" r="1.3" fill="#fff"/><rect x="181.5" y="96.1" width="15" height="15" rx="3.2" fill="#4579df"/><path d="M185.5 100.1 H193.5 V107.1 H187.5 M190.5 100.1 V107.1" fill="none" stroke="#fff" stroke-width="1.4"/><circle cx="185" cy="107.8" r="1.3" fill="#fff"/><circle cx="67.5" cy="92.3" r="11.7" fill="#69a3ec"/><path d="M62.5 88 H72.5 L73.3 99 H61.7 Z" fill="#fff"/><path d="M65 88 C65 83.8 70 83.8 70 88" fill="none" stroke="#fff" stroke-width="1.4"/><circle cx="185" cy="194.7" r="11.7" fill="#69a3ec"/><path d="M177 191 H193 L190 201 H180 Z" fill="#fff"/><path d="M181 191 L185 186 L189 191" fill="none" stroke="#fff" stroke-width="1.3"/><circle cx="319.7" cy="173.3" r="11.7" fill="#9fa4a9"/><path d="M311.5 171 L319.7 167 L328 171 L319.7 175 Z M315 173 V178 C318 180 321.5 180 324.5 178 V173" fill="#fff"/><text x="10" y="119.3" font-family="Liberation Sans, sans-serif" font-size="14.5" fill="#4a88dd" letter-spacing="0.55">Зеленоградский</text><text x="160" y="222.9" font-family="Liberation Sans, sans-serif" font-size="14.5" fill="#4a88dd" letter-spacing="0.5">Магнит</text><text x="282.5" y="200.4" font-family="Liberation Sans, sans-serif" font-size="15" fill="#787878" letter-spacing="0.3">МФЮА, У</text><text x="279" y="216.5" font-family="Liberation Sans, sans-serif" font-size="15" fill="#787878" letter-spacing="0.3">Зеленогр</text><text x="122.7" y="149.7" font-family="Liberation Sans, sans-serif" font-size="12.5" fill="#8a8a8a">2А</text><text x="252" y="73" font-family="Liberation Sans, sans-serif" font-size="12.5" fill="#8a8a8a">1Б</text><text x="259" y="138.5" font-family="Liberation Sans, sans-serif" font-size="12.5" fill="#8a8a8a">с3</text><text x="64" y="203.7" font-family="Liberation Sans, sans-serif" font-size="12.5" fill="#8a8a8a">4</text><text x="120.5" y="238.6" font-family="Liberation Sans, sans-serif" font-size="12.5" fill="#8a8a8a">2</text><text x="160.5" y="269" font-family="Liberation Sans, sans-serif" font-size="12.5" fill="#8a8a8a">2</text><text x="3" y="282.5" font-family="Liberation Sans, sans-serif" font-size="12.5" fill="#8a8a8a">6</text><text transform="translate(-1 68) rotate(-40)" font-family="Liberation Sans, sans-serif" font-size="15.5" fill="#333" letter-spacing="1.4" stroke="#f8db98" stroke-width="0" >кий просп.</text><text transform="translate(-1 217) rotate(-37.5)" font-family="Liberation Sans, sans-serif" font-size="13.5" fill="#444" letter-spacing="0.3">Советская ул.</text><defs><linearGradient id="sh" x1="0" y1="1" x2="1" y2="0"><stop offset="0" stop-color="#555" stop-opacity="0.9"/><stop offset="1" stop-color="#999" stop-opacity="0.15"/></linearGradient></defs><path d="M174 148 L192 127 L203 133 Z" fill="url(#sh)"/><path d="M172.2 147.5 L178.5 128.9 C169 129.5 160.2 122.5 160 113.7 C160 105 167 98 175.6 98 C184.2 98 191.2 105 191.2 113.7 C191.2 116.5 190.4 119 189.2 121.2 Z" fill="#fff" stroke="#fff" stroke-width="3" stroke-linejoin="round"/><path d="M172.2 147.5 L178.5 128.9 C169 129.5 160.2 122.5 160 113.7 C160 105 167 98 175.6 98 C184.2 98 191.2 105 191.2 113.7 C191.2 116.5 190.4 119 189.2 121.2 Z" fill="#4a94f0"/><circle cx="175.6" cy="113.7" r="11.4" fill="#fff"/></g></svg><div class="b" style="left:1336px;top:1214px;width:149px;height:32px;background:#fff;border-radius:5px;box-shadow:0 1px 3px rgba(0,0,0,0.22)"></div><svg style="left:1343px;top:1217px" width="20" height="25" viewBox="0 0 20 25"><path d="M10 24 C8 20 1.5 15 1.5 9.5 C1.5 4.8 5.3 1.2 10 1.2 C14.7 1.2 18.5 4.8 18.5 9.5 C18.5 15 12 20 10 24Z" fill="#ea5140"/><circle cx="10" cy="9.3" r="3.3" fill="#fff"/></svg><div class="b" style="left:1514px;top:1225px;width:151px;height:20px;background:rgba(255,255,255,0.8)"></div><div class="t" id="mapbtn" style="left:1370px;top:1209.312px;font-size:16px;line-height:40px;color:#111;letter-spacing:0px">Как добраться</div><div class="t" id="mapcopy" style="left:1519px;top:1214.47725px;font-size:15.5px;line-height:40px;color:#111;letter-spacing:0.55px">© Яндекс <u>Условия</u></div>
<div class="t" id="title" style="left:64.00px;top:4.80px;font-size:25px;font-weight:700;color:#2a2a2a;letter-spacing:1.225px">Заказ #99</div>
<div class="t r" id="sub" style="left:197.40px;top:7.90px;font-size:18.5px;font-weight:400;color:#6b6b6b;letter-spacing:0.577px">Итого: 3&nbsp;490.00 ₽ / CS-Cart</div>
<div class="t r" id="date" style="left:447.50px;top:7.90px;font-size:16.5px;font-weight:400;color:#8a8a8a;letter-spacing:0.300px">/ 09/09/2024,15:24</div>
<div class="t r" id="save" style="left:1576.40px;top:5.30px;font-size:18.5px;font-weight:400;color:#ffffff;letter-spacing:0.537px">Сохранить</div>
<div class="t r" id="th1" style="left:37.30px;top:85.00px;font-size:17.5px;font-weight:400;color:#6e6e6e;letter-spacing:0.725px">Товар</div>
<div class="t r" id="th2" style="left:531.60px;top:85.00px;font-size:17.5px;font-weight:400;color:#6e6e6e;letter-spacing:0.667px">Цена</div>
<div class="t r" id="th3" style="left:658.40px;top:85.00px;font-size:17.5px;font-weight:400;color:#6e6e6e;letter-spacing:0.940px">Кол-во</div>
<div class="t r" id="th4" style="left:785.80px;top:85.00px;font-size:17.5px;font-weight:400;color:#6e6e6e;letter-spacing:0.650px">Сумма</div>
<div class="t r" id="pname" style="left:100.40px;top:133.00px;font-size:17.5px;font-weight:400;color:#4a96e8;letter-spacing:0.330px">Dualshock 4</div>
<div class="t r" id="pcode" style="left:100.40px;top:156.60px;font-size:17.5px;font-weight:400;color:#2a2a2a;letter-spacing:0.162px">КОД:K290B2KRD2</div>
<div class="t r" id="ppts" style="left:100.40px;top:180.70px;font-size:17.5px;font-weight:400;color:#2a2a2a;letter-spacing:0.200px"><b>Цена в баллах:</b> 2770</div>
<div class="t r" id="price" style="left:531.60px;top:163.70px;font-size:17.5px;font-weight:400;color:#2a2a2a;letter-spacing:0.356px">2&nbsp;770.00 ₽</div>
<div class="t r" id="qty" style="left:683.60px;top:163.70px;font-size:17.5px;font-weight:400;color:#2a2a2a;letter-spacing:-1.200px">1</div>
<div class="t r" id="sum" style="left:757.60px;top:163.70px;font-size:17.5px;font-weight:400;color:#2a2a2a;letter-spacing:0.311px">2&nbsp;770.00 ₽</div>
<div class="t" id="tot_h" style="left:777.00px;top:273.00px;font-size:23px;font-weight:700;color:#2a2a2a;letter-spacing:0.325px">Итого</div>
<div class="t r" id="t1l" style="left:641.90px;top:313.70px;font-size:17.5px;font-weight:400;color:#2a2a2a;letter-spacing:0.560px">Сумма:</div>
<div class="t r" id="t1r" style="left:756.50px;top:313.70px;font-size:17.5px;font-weight:400;color:#2a2a2a;letter-spacing:0.300px">2&nbsp;770.00 ₽</div>
<div class="t r" id="t2l" style="left:525.70px;top:344.10px;font-size:17.5px;font-weight:400;color:#2a2a2a;letter-spacing:0.500px">Стоимость доставки:</div>
<div class="t r" id="t2r" style="left:771.00px;top:344.10px;font-size:17.5px;font-weight:400;color:#2a2a2a;letter-spacing:0.457px">720.00 ₽</div>
<div class="t r" id="t3l" style="left:638.60px;top:373.10px;font-size:17.5px;font-weight:400;color:#2a2a2a;letter-spacing:0.517px">Налоги:</div>
<div class="t r" id="t4l" style="left:489.30px;top:401.80px;font-size:17.5px;font-weight:400;color:#2a2a2a;letter-spacing:0.352px">· VAT 20% 20% Включено</div>
<div class="t r" id="t4r" style="left:773.60px;top:401.80px;font-size:17.5px;font-weight:400;color:#2a2a2a;letter-spacing:0.086px">461.67 ₽</div>
<div class="t" id="t5l" style="left:630.40px;top:446.80px;font-size:22.5px;font-weight:700;color:#2a2a2a;letter-spacing:0.860px">Итого:</div>
<div class="t" id="t5r" style="left:730.20px;top:446.80px;font-size:22.5px;font-weight:700;color:#69ad45;letter-spacing:0.556px">3&nbsp;490.00 ₽</div>
<div class="t r" id="n1" style="left:36.20px;top:487.30px;font-size:17.5px;font-weight:400;color:#2a2a2a;letter-spacing:1.175px">Примечания покупателя</div>
<div class="t r" id="n2" style="left:448.60px;top:487.30px;font-size:17.5px;font-weight:400;color:#2a2a2a;letter-spacing:1.171px">Примечания администратора</div>
<div class="t r" id="bc" style="left:366.50px;top:737.60px;font-size:23px;font-weight:400;color:#111111;letter-spacing:1.022px">FF45CR9999</div>
<div class="t" id="st" style="left:881.70px;top:97.00px;font-size:22.5px;font-weight:700;color:#2a2a2a;letter-spacing:0.620px">Статус</div>
<div class="t r" id="open" style="left:900.30px;top:132.70px;font-size:18px;font-weight:400;color:#ffffff;letter-spacing:1.180px">Открыт</div>
<div class="t" id="payh" style="left:881.70px;top:197.40px;font-size:22.5px;font-weight:700;color:#2a2a2a;letter-spacing:0.226px">Информация об оплате</div>
<div class="t r" id="pay1" style="left:881.90px;top:236.00px;font-size:17.5px;font-weight:400;color:#2a2a2a;letter-spacing:0.540px">Способ</div>
<div class="t r" id="pay2" style="left:881.90px;top:262.50px;font-size:17.5px;font-weight:400;color:#2a2a2a;letter-spacing:0.533px">Qiwi</div>
<div class="t" id="mgr" style="left:881.90px;top:301.90px;font-size:22.5px;font-weight:700;color:#2a2a2a;letter-spacing:1.271px">Менеджер</div>
<div class="t r" id="ph" style="left:893.60px;top:357.40px;font-size:17.5px;font-weight:400;color:#9d9d9d;letter-spacing:0.648px">Введите поисковый запрос</div>
<div class="t" id="shh" style="left:881.90px;top:424.40px;font-size:22.5px;font-weight:700;color:#2a2a2a;letter-spacing:0.305px">Информация о доставке</div>
<div class="t r" id="sh1" style="left:881.90px;top:462.90px;font-size:17.5px;font-weight:400;color:#2a2a2a;letter-spacing:0.350px">CS-Cart</div>
<div class="t r" id="sh2" style="left:881.90px;top:503.60px;font-size:17.5px;font-weight:400;color:#2a2a2a;letter-spacing:0.540px">Способ</div>
<div class="t r" id="sh3" style="left:881.90px;top:531.00px;font-size:17.5px;font-weight:400;color:#2a2a2a;letter-spacing:0.700px">СДЭК</div>
<div class="t r" id="trk" style="left:881.90px;top:572.80px;font-size:17.5px;font-weight:400;color:#2a2a2a;letter-spacing:1.165px">Номер отслеживания</div>
<div class="t r" id="car" style="left:881.90px;top:663.90px;font-size:17.5px;font-weight:400;color:#2a2a2a;letter-spacing:1.367px">Перевозчик</div>
<div class="t r" id="mk" style="left:985.70px;top:778.00px;font-size:17.5px;font-weight:400;color:#4a96e8;letter-spacing:0.464px">Создать отдельную отгрузку</div>
<div class="t" id="ofh" style="left:881.90px;top:891.00px;font-size:22.5px;font-weight:700;color:#2a2a2a;letter-spacing:0.170px">Офис службы доставки:</div>
<div class="t" id="ofb" style="left:881.90px;top:930.10px;font-size:17.5px;font-weight:700;color:#2a2a2a;letter-spacing:0.700px">MSK2283, Москва</div>
<div class="t r" id="o1" style="left:881.90px;top:970.00px;font-size:17.5px;font-weight:400;color:#7b7b7b;letter-spacing:0.524px">Можайское шоссе, 9</div>
<div class="t r" id="o2" style="left:881.90px;top:995.80px;font-size:17.5px;font-weight:400;color:#7b7b7b;letter-spacing:0.640px">Пн-Пт 09:00-21:00, Сб-Вс 10:00-20:00</div>
<div class="t r" id="o3" style="left:881.90px;top:1022.80px;font-size:17.5px;font-weight:400;color:#7b7b7b;letter-spacing:0.982px">+79636289232</div>
<div class="t r" id="o4" style="left:881.90px;top:1049.80px;font-size:17.5px;font-weight:400;color:#7b7b7b;letter-spacing:0.388px">М. Кунцевская, выход - 1 вагона из центра,</div>
<div class="t r" id="o5" style="left:882.90px;top:1075.60px;font-size:17.5px;font-weight:400;color:#7b7b7b;letter-spacing:0.144px">автобусы 45,190,610, марш.1193 до</div>
<div class="t r" id="o6" style="left:882.90px;top:1102.60px;font-size:17.5px;font-weight:400;color:#7b7b7b;letter-spacing:0.486px">остановки «ул. Багрицкого». Перейти на</div>
<div class="t r" id="o7" style="left:882.90px;top:1129.60px;font-size:17.5px;font-weight:400;color:#7b7b7b;letter-spacing:0.603px">другую сторону Можайского шоссе, зайти</div>
<div class="t r" id="o8" style="left:881.90px;top:1155.40px;font-size:17.5px;font-weight:400;color:#7b7b7b;letter-spacing:0.324px">в арку дома №9. Вход в ПВЗ справа от 8</div>
<div class="t r" id="o9" style="left:881.90px;top:1182.40px;font-size:17.5px;font-weight:400;color:#7b7b7b;letter-spacing:0.538px">подъезда.</div>
<div class="t" id="c1h" style="left:1325.00px;top:78.40px;font-size:21px;font-weight:700;color:#2a2a2a;letter-spacing:0.468px">Информация о покупателе</div>
<div class="t" id="c1a" style="left:1354.40px;top:122.70px;font-size:17.5px;font-weight:700;color:#4a96e8;letter-spacing:0.171px">Покупатель Главный</div>
<div class="t" id="c1b" style="left:1354.90px;top:153.50px;font-size:17.5px;font-weight:700;color:#4a96e8;letter-spacing:0.231px">admin@example.com</div>
<div class="t r" id="c1c" style="left:1354.40px;top:185.20px;font-size:17.5px;font-weight:400;color:#2a2a2a;letter-spacing:0.287px">IP адрес:</div>
<div class="t r" id="c1d" style="left:1354.40px;top:209.00px;font-size:17.5px;font-weight:400;color:#2a2a2a;letter-spacing:0.291px">95.26.98.164</div>
<div class="t r" id="c1e" style="left:1355.40px;top:239.70px;font-size:17.5px;font-weight:400;color:#2a2a2a;letter-spacing:0.014px">Телефон:</div>
<div class="t r" id="c1f" style="left:1436.60px;top:239.70px;font-size:17.5px;font-weight:400;color:#4a96e8;letter-spacing:0.391px">+16175555555</div>
<div class="t" id="c2h" style="left:1326.20px;top:379.00px;font-size:21px;font-weight:700;color:#2a2a2a;letter-spacing:0.446px">Адрес доставки</div>
<div class="t r" id="c2a" style="left:1355.40px;top:423.50px;font-size:17.5px;font-weight:400;color:#2a2a2a;letter-spacing:-0.086px">Ленина 1</div>
<div class="t r" id="c2b" style="left:1354.40px;top:450.50px;font-size:17.5px;font-weight:400;color:#2a2a2a;letter-spacing:0.400px">Москва, Москва 101000</div>
<div class="t r" id="c2c" style="left:1354.40px;top:477.80px;font-size:17.5px;font-weight:400;color:#2a2a2a;letter-spacing:0.500px">Россия</div>
<div class="t" id="c3h" style="left:1326.20px;top:618.00px;font-size:21px;font-weight:700;color:#2a2a2a;letter-spacing:0.319px">Адрес плательщика</div>
<div class="t" id="c3a" style="left:1354.40px;top:663.50px;font-size:17.5px;font-weight:700;color:#2a2a2a;letter-spacing:0.171px">Покупатель Главный</div>
<div class="t r" id="c3b" style="left:1355.40px;top:689.60px;font-size:17.5px;font-weight:400;color:#2a2a2a;letter-spacing:-0.086px">Ленина 1</div>
<div class="t r" id="c3c" style="left:1354.40px;top:716.40px;font-size:17.5px;font-weight:400;color:#2a2a2a;letter-spacing:0.400px">Москва, Москва 101000</div>
<div class="t r" id="c3d" style="left:1354.40px;top:743.30px;font-size:17.5px;font-weight:400;color:#2a2a2a;letter-spacing:0.500px">Россия</div>
<div class="t r" id="c3e" style="left:1354.40px;top:769.20px;font-size:17.5px;font-weight:400;color:#4a96e8;letter-spacing:0.336px">+16175555555</div>
<div class="t" id="c4h" style="left:1325.90px;top:911.70px;font-size:21px;font-weight:700;color:#2a2a2a;letter-spacing:0.386px">Адрес доставки на карте</div>
<div class="b" style="left:0;top:1226px;width:1704px;height:80px;background:linear-gradient(to bottom, rgba(0,0,0,0) 0%, rgba(0,0,0,0.018) 40%, rgba(0,0,0,0.08) 100%)"></div>
</body></html>
